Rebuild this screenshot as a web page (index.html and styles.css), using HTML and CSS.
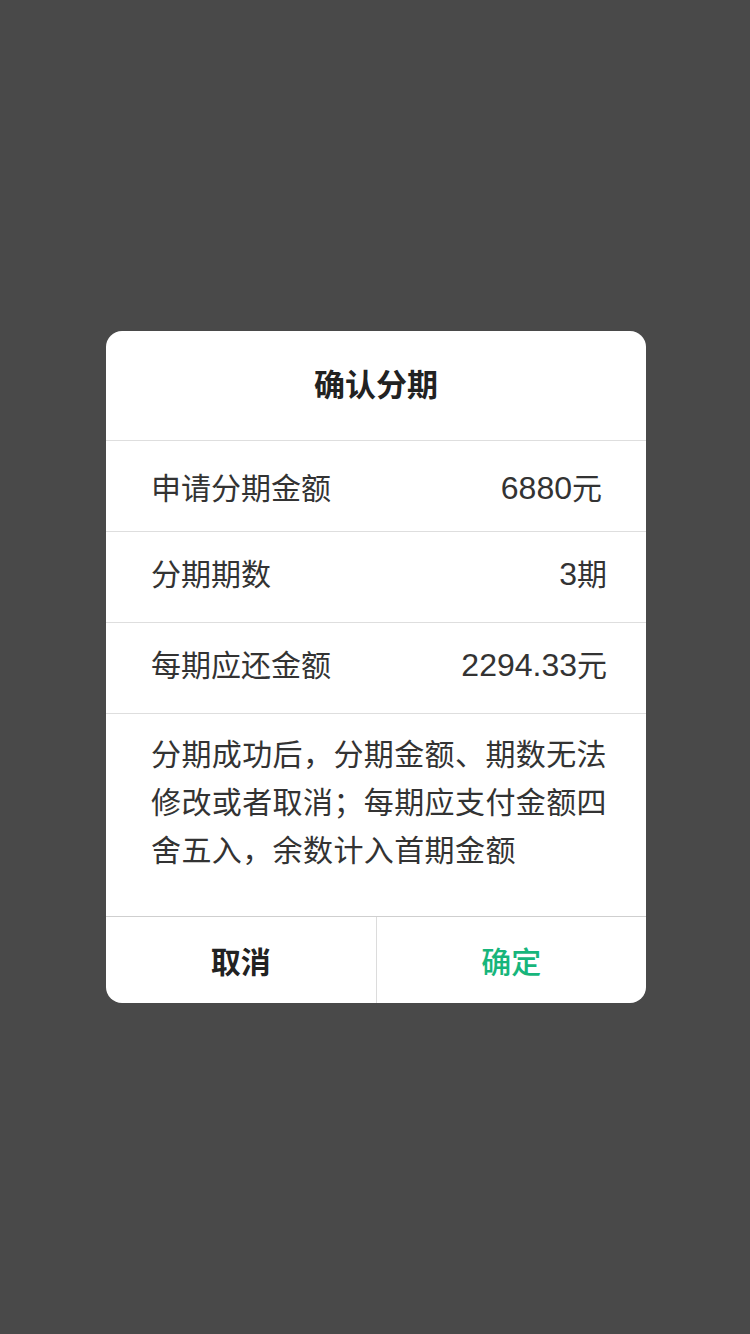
FILE: index.html
```html
<!DOCTYPE html>
<html lang="zh">
<head>
<meta charset="utf-8">
<link rel="stylesheet" href="styles.css">
</head>
<body>
<div class="mask">
  <div class="dialog">
    <div class="title">确认分期</div>
    <div class="row first"><span>申请分期金额</span><span class="val v1"><span class="num">6880</span>元</span></div>
    <div class="row"><span>分期期数</span><span class="val"><span class="num">3</span>期</span></div>
    <div class="row"><span>每期应还金额</span><span class="val"><span class="num">2294.33</span>元</span></div>
    <div class="desc">分期成功后，分期金额、期数无法修改或者取消；每期应支付金额四舍五入，余数计入首期金额</div>
    <div class="footer">
      <div class="btn cancel">取消</div>
      <div class="btn ok">确定</div>
    </div>
  </div>
</div>
</body>
</html>
```
FILE: styles.css
```css
html, body {
  margin: 0;
  padding: 0;
  width: 750px;
  height: 1334px;
  background: #494949;
  font-family: "Noto Sans CJK SC", "Noto Sans", sans-serif;
}
.mask {
  width: 750px;
  height: 1334px;
  display: flex;
  align-items: flex-start;
  justify-content: flex-start;
  padding: 331px 0 0 106px;
  box-sizing: border-box;
}
.dialog {
  width: 540px;
  background: #fff;
  border-radius: 16px;
  overflow: hidden;
}
.title {
  height: 103px;
  padding-bottom: 6px;
  display: flex;
  align-items: center;
  justify-content: center;
  font-size: 31px;
  font-weight: 700;
  color: #222;
  border-bottom: 1px solid #dedede;
}
.row {
  height: 80px;
  padding: 0 39px 10px 45px;
  display: flex;
  align-items: center;
  justify-content: space-between;
  font-size: 30px;
  font-weight: 400;
  color: #333;
  border-bottom: 1px solid #dedede;
}
.row.first {
  height: 90px;
  padding-bottom: 0;
}
.row .num {
  font-family: "Liberation Sans", Arial, sans-serif;
  font-size: 32px;
  font-weight: 400;
}
.row .v1 {
  margin-right: 5px;
}
.desc {
  padding: 14px 39px 44px 45px;
  font-size: 30px;
  font-weight: 400;
  letter-spacing: 0.4px;
  line-height: 48px;
  color: #333;
  border-bottom: 1px solid #cfcfcf;
}
.footer {
  display: flex;
  height: 86px;
}
.btn {
  flex: 1;
  display: flex;
  align-items: center;
  justify-content: center;
  font-size: 30px;
  font-weight: 700;
}
.cancel {
  color: #222;
  border-right: 1px solid #dcdcdc;
}
.ok {
  color: #17b57b;
  font-weight: 500;
}
```
